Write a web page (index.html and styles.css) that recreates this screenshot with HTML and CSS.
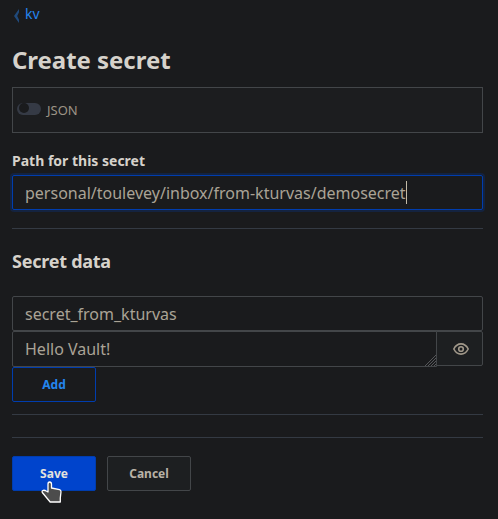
FILE: index.html
```
<!DOCTYPE html>
<html lang="en">
<head>
<meta charset="utf-8">
<title>Create secret</title>
<link rel="stylesheet" href="styles.css">
</head>
<body>
<main class="page">
  <nav class="breadcrumb">
    <svg class="chevron" width="6" height="14" viewBox="0 0 6 14"><path d="M5 0v3.200L3.200 7 5 10.800V14L0 7z"/></svg>
    <a class="crumb">kv</a>
  </nav>
  <h1 class="title">Create secret</h1>
  <div class="toolbar">
    <span class="switch"><span class="knob"></span></span>
    <span class="switch-label">JSON</span>
  </div>
  <label class="label">Path for this secret</label>
  <div class="field focused"><span>personal/toulevey/inbox/from-kturvas/demosecret</span><i class="caret"></i></div>
  <hr class="rule">
  <h2 class="subtitle">Secret data</h2>
  <div class="field">secret_from_kturvas</div>
  <div class="value-row">
    <div class="field value">Hello Vault!
      <svg class="grip" width="11" height="11" viewBox="0 0 11 11"><path d="M0 11 11 0M3 11l8-8M6 11l5-5M9 11l2-2"/></svg>
    </div>
    <button class="reveal" aria-label="Toggle value">
      <svg width="16" height="12" viewBox="0 0 16 12"><path d="M.8 6C2.500 2.700 5 .9 8 .9S13.500 2.700 15.200 6C13.500 9.300 11 11.100 8 11.100S2.500 9.300.8 6z"/><circle cx="8" cy="6" r="2.300"/></svg>
    </button>
  </div>
  <button class="button add">Add</button>
  <hr class="rule rule-first">
  <hr class="rule rule-second">
  <div class="actions">
    <button class="button save">Save
      <svg class="pointer" width="21" height="22" viewBox="0 0 21 22"><path d="M7 11V3.200Q7 1 8.700 1t1.800 2.200V7l8 1.700q1.500.4 1.500 2L19.300 17v4H9.200L7.500 19 1.300 11.500Q.6 9.800 2.300 9.300q1.600-.2 2.900.7z"/></svg>
    </button>
    <button class="button cancel">Cancel</button>
  </div>
</main>
</body>
</html>
```
FILE: styles.css
```
* { box-sizing: border-box; }
body {
  margin: 0;
  background: #1a1b1d;
  color: #d6d2cb;
  font-family: "Noto Sans", sans-serif;
}
.page { height: 519px; padding: 4px 15px 0 12px; overflow: hidden; }
.breadcrumb { display: flex; height: 20px; align-items: center; gap: 5px; padding-left: 2px; }
.chevron { fill: #204a7c; position: relative; top: 2px; }
.crumb { color: #2485ee; font-size: 14px; line-height: 20px; }
.title { margin: 20px 0 0; font-size: 24px; line-height: 32px; font-weight: 700; letter-spacing: -.04px; }
.toolbar {
  display: flex;
  height: 46px;
  margin-top: 11px;
  padding-left: 4px;
  border: 1px solid #434649;
  background: #1c1d1f;
}
.switch { width: 24px; height: 12px; margin-top: 15px; border-radius: 6px; background: #353a45; }
.knob { display: block; width: 10px; height: 10px; margin: 0 0 0 2px; border-radius: 50%; background: #1a1b1d; }
.switch-label { margin: 12px 0 0 6px; color: #9c9486; font-size: 13px; line-height: 20px; }
.label { display: block; margin-top: 18px; font-size: 14px; line-height: 20px; font-weight: 700; }
.field {
  display: flex;
  align-items: center;
  height: 35px;
  padding: 0 12px;
  border: 1px solid #434649;
  border-radius: 2px;
  color: #aaa396;
  font-size: 16px;
  line-height: 24px;
}
.focused { margin-top: 4px; border-color: #003dae; box-shadow: 0 0 0 2px #14233f; }
.caret { width: 1px; height: 23px; background: #c2bba8; }
.rule { height: 1px; margin: 18px 0 0; border: 0; background: #343a43; }
.subtitle { margin: 20px 0 23px; font-size: 18px; line-height: 24px; font-weight: 700; letter-spacing: -.25px; }
.value-row { display: flex; }
.value { position: relative; flex: 1; height: 36px; border-radius: 2px 0 0 2px; }
.grip { position: absolute; right: 0; bottom: 0; stroke: #66676a; stroke-width: .8; }
.reveal {
  width: 47px;
  height: 35px;
  margin-left: -1px;
  padding: 0 0 0 2px;
  border: 1px solid #434649;
  border-radius: 0 2px 2px 0;
  background: #1d1f21;
  position: relative;
}
.reveal svg { display: block; margin: auto; fill: none; stroke: #a1988a; stroke-width: 1.6; }
.button {
  position: relative;
  display: block;
  width: 84px;
  height: 35px;
  padding: 0;
  border: 1px solid #434649;
  border-radius: 2px;
  background: #1d1f21;
  color: #b9b2a6;
  font: 700 12px/20px "Noto Sans", sans-serif;
}
.add { border-color: #003dae; background: transparent; color: #2485ee; }
.rule-first { margin-top: 12px; }
.rule-second { margin-top: 22px; }
.actions { display: flex; gap: 11px; margin-top: 18px; }
.save { border-color: #003dae; background: #0044cc; color: #e3e1dd; }
.pointer { position: absolute; left: 28px; top: 24px; z-index: 1; fill: #4c4c4c; stroke: #fff; stroke-width: 1.300; stroke-linejoin: round; }
```
